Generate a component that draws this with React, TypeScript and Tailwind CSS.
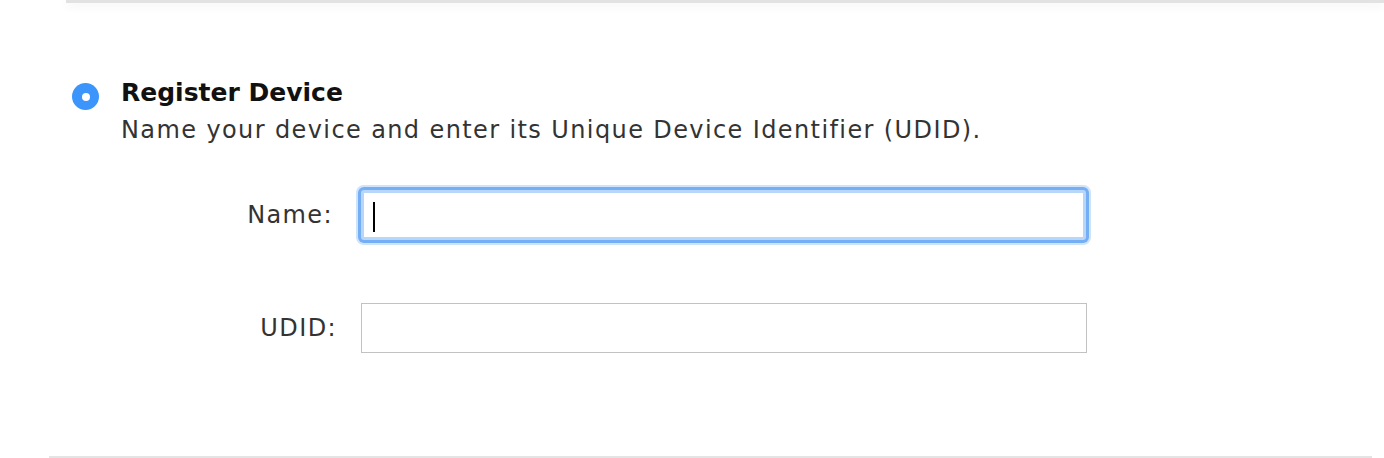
export default function App() {
  return (
    <div className="relative h-[458px] w-full overflow-hidden bg-white font-['DejaVu_Sans',sans-serif]">
      {/* top bar edge */}
      <div className="ml-[66px] h-[3px] bg-[#e2e2e2] shadow-[0_3px_8px_rgba(0,0,0,0.08)]" />

      <div className="pl-[72px] pt-[74px]">
        {/* Heading */}
        <div className="flex items-start gap-[22px]">
          <div className="mt-[6px] flex h-[27px] w-[27px] shrink-0 items-center justify-center rounded-full bg-[#3b95fb]">
            <div className="h-[8px] w-[8px] rounded-full bg-white" />
          </div>
          <div>
            <h2 className="text-[25px] font-bold leading-[32px] text-[#111]">Register Device</h2>
            <p className="mt-[5px] text-[24px] leading-[32px] tracking-[0.058em] text-[#333]">
              Name your device and enter its Unique Device Identifier (UDID).
            </p>
          </div>
        </div>

        {/* Form */}
        <div className="mt-[44px] flex flex-col gap-[63px]">
          <div className="flex items-center">
            <label className="w-[289px] pr-[28px] text-right text-[24px] tracking-[0.058em] text-[#333]">Name:</label>
            <div className="relative h-[50px] w-[725px] rounded-[3px] border-[3px] border-[#b8d6fa] bg-white shadow-[0_0_0_3px_#74aef5,0_0_0_5px_#cfe3fb]">
              <div className="absolute left-[9px] top-[9px] h-[30px] w-[2px] bg-black" />
            </div>
          </div>
          <div className="flex items-center">
            <label className="w-[289px] pr-[24px] text-right text-[24px] tracking-[0.058em] text-[#333]">UDID:</label>
            <div className="h-[50px] w-[726px] border border-[#c2c2c2] bg-white" />
          </div>
        </div>
      </div>

      {/* bottom divider */}
      <div className="absolute bottom-0 left-[49px] right-[12px] h-[2px] bg-[#e4e4e4]" />
    </div>
  );
}
